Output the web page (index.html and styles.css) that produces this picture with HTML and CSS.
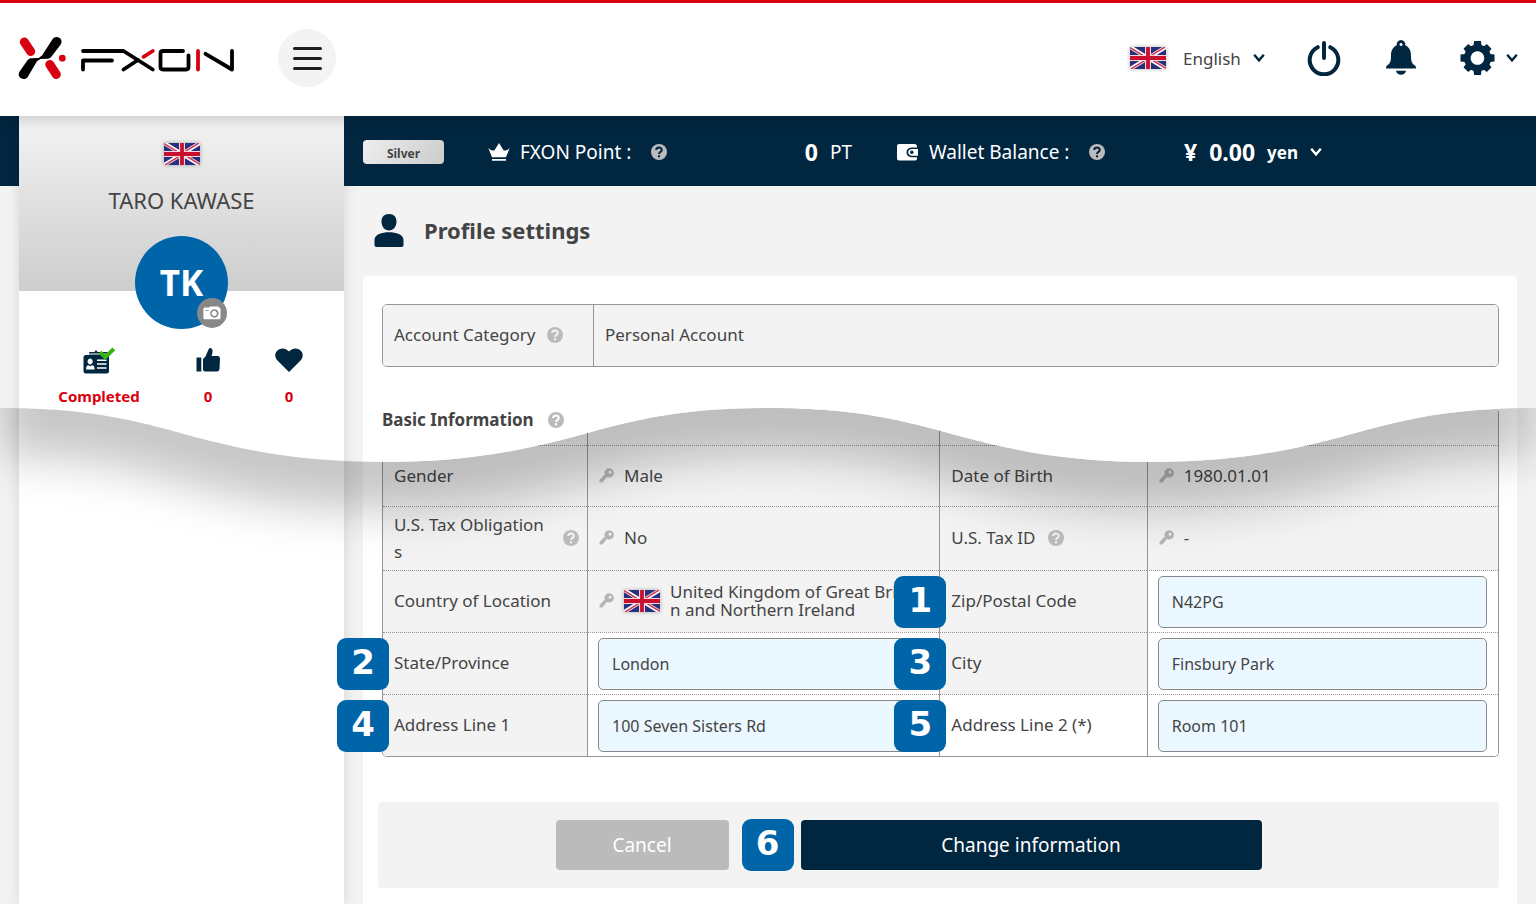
FILE: index.html
```html
<!DOCTYPE html>
<html lang="en">
<head>
<meta charset="utf-8">
<meta name="viewport" content="width=device-width, initial-scale=1">
<title>Profile settings | FXON</title>
<link rel="stylesheet" href="styles.css">
</head>
<body>
<svg class="defs" aria-hidden="true">
  <symbol id="flag" viewBox="0 0 36 22">
    <rect width="36" height="22" fill="#28307c"/>
    <path d="M0 0L36 22M36 0L0 22" stroke="#fff" stroke-width="4"/>
    <path d="M0 .6L17 11M36 21.4L19 11M35 0L18 10.4M1 22L18 11.6" stroke="#d0395a" stroke-width="1.6"/>
    <path d="M18 0V22M0 11H36" stroke="#f3d5dc" stroke-width="6"/>
    <path d="M18 0V22M0 11H36" stroke="#c8102e" stroke-width="3.8"/>
  </symbol>
  <symbol id="chevron" viewBox="0 0 12 10">
    <path d="M1.2 1.8L6 7.4L10.8 1.8" fill="none" stroke="currentColor" stroke-width="2.4"/>
  </symbol>
  <symbol id="help" viewBox="0 0 16 16">
    <circle cx="8" cy="8" r="8" fill="#bbb"/>
    <path d="M5.2 6.1C5.2 2.6 10.8 2.7 10.8 5.9C10.8 7.9 8 7.8 8 10" fill="none" stroke="var(--mark)" stroke-width="2"/>
    <rect x="7" y="11.2" width="2" height="2.1" fill="var(--mark)"/>
  </symbol>
  <symbol id="key" viewBox="0 0 15 15">
    <path fill="currentColor" fill-rule="evenodd" d="M10 .3a4.6 4.6 0 1 1-2 8.6L6.600 10.300 6.500 11.500 5 11.700 4.700 13.200 3.200 14.600H.5V12L5.800 6.500A4.600 4.600 0 0 1 10 .3ZM11 2.700a1.500 1.500 0 1 0 .1 0Z"/>
  </symbol>
</svg>

<div class="page">
  <header class="header">
    <a class="logo" href="#" aria-label="FXON">
      <svg width="218" height="44" viewBox="18 36 218 44" fill="none" stroke-linecap="round" aria-hidden="true">
        <path d="M24.300 42L30.700 51.500" stroke="#d9000f" stroke-width="9"/>
        <path d="M49.800 64.500L56.300 74.500" stroke="#d9000f" stroke-width="9"/>
        <path d="M52.500 39.300C54 36.800 57 36.400 59.300 37.800C61.800 39.300 62.300 42.200 60.600 44.800L51.500 56.500C50 58.400 48.800 58.800 46.500 58.800L40.500 59L37 61.200L28 76.500C26.300 79.200 23.500 79.700 21 78.300C18.600 76.700 18 73.700 19.800 71.200L27.300 60.500C28.600 58.700 30 58.200 32 58.200L38.500 58L42 55.500Z" fill="#000"/>
        <circle cx="62.300" cy="58.200" r="3.400" fill="#d9000f"/>
        <g stroke="#000" stroke-width="3.800" stroke-linejoin="round">
          <path d="M83 51H123.500L152.800 69.500"/>
          <path d="M83 69.500V60.500H112"/>
          <path d="M123.500 69.500L138 60"/>
          <path d="M183 51H163Q160.500 51 160.500 53.500V67Q160.500 69.500 163 69.500H186Q188.500 69.500 188.500 67V55.500"/>
          <path d="M205.500 53.800L232 69.500V51"/>
        </g>
        <path d="M143.500 56.800L152.800 51M198 51V69.500" stroke="#d9000f" stroke-width="3.800"/>
      </svg>
    </a>
    <button class="menu" type="button" aria-label="Menu"><span></span><span></span><span></span></button>
    <div class="tools">
      <div class="language">
        <svg class="flag" width="36" height="22" aria-hidden="true"><use href="#flag"/></svg>
        <span class="picker">
          <select aria-label="Language"><option>English</option></select>
          <svg class="chevron" width="12" height="10" aria-hidden="true"><use href="#chevron"/></svg>
        </span>
      </div>
      <button class="tool" type="button" aria-label="Log out">
        <svg width="34" height="36" viewBox="0 0 34 36" fill="none" stroke="currentColor" stroke-width="4" stroke-linecap="round"><path d="M10.700 7.200A14.300 14.300 0 1 0 23.300 7.200M17 3V18"/></svg>
      </button>
      <button class="tool" type="button" aria-label="Notifications">
        <svg width="30" height="36" viewBox="0 0 30 36" fill="currentColor"><path fill-rule="evenodd" d="M15 0a4.300 4.300 0 0 1 4.200 5.300C23.500 7.300 25 11 25 15.500C25 21.500 25.800 23.500 29 25.500Q30 26.300 30 28.400H0Q0 26.300 1 25.500C4.200 23.500 5 21.500 5 15.500C5 11 6.500 7.300 10.800 5.300A4.300 4.300 0 0 1 15 0ZM15 2.900a1.500 1.500 0 1 0 .1 0Z"/><path d="M10 30.800H20C19.300 36 10.700 36 10 30.800Z"/></svg>
      </button>
      <button class="tool tool-settings" type="button" aria-label="Settings">
        <svg width="35" height="36" viewBox="-18 -18 36 36" fill="currentColor"><path fill-rule="evenodd" d="M0-14a14 14 0 1 0 .1 0ZM0-7a7 7 0 1 1-.1 0Z"/><g id="teeth"><path d="M-4.200-12L-3.500-17.500H3.500L4.200-12ZM-4.200 12L-3.500 17.500H3.500L4.200 12ZM-12-4.200L-17.500-3.500V3.500L-12 4.200ZM12-4.200L17.500-3.500V3.500L12 4.200Z"/></g><use href="#teeth" transform="rotate(45) scale(.97)"/></svg>
        <svg class="chevron" width="12" height="10" aria-hidden="true"><use href="#chevron"/></svg>
      </button>
    </div>
  </header>

  <div class="shell">
    <aside class="sidebar">
      <div class="identity">
        <svg class="flag" width="36" height="22" aria-hidden="true"><use href="#flag"/></svg>
        <p class="name">TARO KAWASE</p>
        <div class="avatar">TK
          <button class="camera" type="button" aria-label="Change picture">
            <svg width="18" height="14" viewBox="0 0 18 14"><path fill="#fff" fill-rule="evenodd" d="M1.500 1.500H6L7.500 .5H15L16.300 1.500Q17.500 1.600 17.500 3V12Q17.500 13.300 16.300 13.300H1.500Q.4 13.300 .4 12V3Q.4 1.600 1.500 1.500ZM2.300 4.200V5H5.800V4.200ZM11.300 3.200a4.200 4.200 0 1 0 .1 0ZM11.300 4.800a2.600 2.600 0 1 1-.1 0Z"/></svg>
          </button>
        </div>
      </div>
      <ul class="stats">
        <li>
          <svg width="32" height="28" viewBox="0 0 32 28"><path fill="#002640" d="M2.500 8H6V6Q6 5 7 5H11.500Q13 1.500 14.500 5H24Q25.500 5.500 25.500 8Q26 9 26 10V24Q26 26.500 23.500 26.500H3Q.5 26.500 .5 24V10Q.5 8.300 2.500 8Z"/><path fill="#fff" d="M2 6.500H24V7.500H2ZM7.200 11.500a2.600 3 0 1 1-.1 0ZM3 22.500Q3 18.200 5.500 18.200L7.200 19.200L9 18.200Q11.600 18.200 11.600 22.500ZM14 12.500H23.500V14H14ZM14 16.300H23.500V17.800H14ZM14 20.300H23.500V21.800H14Z"/><path d="M17 5.300L22.300 10.300L30.800 1.800" fill="none" stroke="#34b50a" stroke-width="4"/></svg>
          <strong>Completed</strong>
        </li>
        <li>
          <svg width="24" height="28" viewBox="0 0 24 28" fill="#002640"><path d="M.5 10.500H5.300V24.500H.5ZM7 12L9.500 9.500L12.500 2.500Q14-.2 16 2Q17.300 4.500 15.500 9H22Q24 9 24 11.500L23.500 22Q23 24.500 21 24.500H9Q7 24.500 7 22.500Z"/></svg>
          <strong>0</strong>
        </li>
        <li>
          <svg width="28" height="28" viewBox="0 0 28 28" fill="#002640"><path d="M14 25L2 13C-4 5 7-3 14 4.500C21-3 32 5 26 13Z"/></svg>
          <strong>0</strong>
        </li>
      </ul>
    </aside>

    <main class="main">
      <div class="account-bar">
        <button class="rank" type="button">Silver</button>
        <div class="balance points">
          <svg width="22" height="18" viewBox="0 0 22 18" fill="#fff"><path d="M.3 5Q3.500 8.500 6.500 7.200L11 0L15.500 7.200Q18.500 8.500 21.700 5L18 14.200H4ZM4 16H18V17.800H4Z"/></svg>
          <span>FXON Point :</span>
          <svg class="help" width="16" height="16" role="img" aria-label="Help"><use href="#help"/></svg>
          <span class="value"><strong>0</strong><span>PT</span></span>
        </div>
        <div class="balance">
          <svg width="22" height="17" viewBox="0 0 22 17"><path fill="#fff" d="M2 0H17.500Q20 0 20 2.500V3.500H14.500Q9.500 4 9.500 8.300Q9.500 12.800 14.500 13.200H20V14.500Q20 16.500 18 16.500H2Q0 16.500 0 14.500V2Q0 0 2 0ZM14.500 5H21V11.700H14.500Q11.200 11.200 11.200 8.300Q11.200 5.500 14.500 5Z"/><circle cx="14.800" cy="8.300" r="1.700" fill="#002640"/></svg>
          <span>Wallet Balance :</span>
          <svg class="help" width="16" height="16" role="img" aria-label="Help"><use href="#help"/></svg>
        </div>
        <div class="money">
          <strong>¥</strong><strong>0.00</strong>
          <span class="picker">
            <select aria-label="Currency"><option>yen</option></select>
            <svg class="chevron" width="12" height="10" aria-hidden="true"><use href="#chevron"/></svg>
          </span>
        </div>
      </div>

      <h1 class="title">
        <svg width="30" height="34" viewBox="0 0 30 34" fill="#002640" aria-hidden="true"><path d="M15 0C20 0 22.500 3 22.500 7.500C22.500 12.500 19.500 16.500 15 16.500S7.500 12.500 7.500 7.500C7.500 3 10 0 15 0ZM15 18.300C22 18.300 29.500 20.500 29.500 26V31Q29.500 33 27.500 33H2.500Q.5 33 .5 31V26C.5 20.500 8 18.300 15 18.300Z"/></svg>
        <span>Profile settings</span>
      </h1>

      <form class="panel">
        <table class="category">
          <tr>
            <th scope="row"><span class="label">Account Category <svg class="help" width="16" height="16" role="img" aria-label="Help"><use href="#help"/></svg></span></th>
            <td>Personal Account</td>
          </tr>
        </table>

        <section class="basic">
          <h2 class="subtitle">Basic Information <svg class="help" width="16" height="16" role="img" aria-label="Help"><use href="#help"/></svg></h2>
          <table class="details">
            <colgroup><col class="col-first"><col class="col-value"><col class="col-label"><col class="col-last"></colgroup>
            <tr class="cut"><td></td><td></td><td></td><td></td></tr>
            <tr class="short">
              <th scope="row">Gender</th>
              <td><span class="locked"><svg class="key" width="15" height="15" aria-hidden="true"><use href="#key"/></svg>Male</span></td>
              <th scope="row">Date of Birth</th>
              <td><span class="locked"><svg class="key" width="15" height="15" aria-hidden="true"><use href="#key"/></svg>1980.01.01</span></td>
            </tr>
            <tr class="tall">
              <th scope="row"><span class="label spread"><span>U.S. Tax Obligations</span> <svg class="help" width="16" height="16" role="img" aria-label="Help"><use href="#help"/></svg></span></th>
              <td><span class="locked"><svg class="key" width="15" height="15" aria-hidden="true"><use href="#key"/></svg>No</span></td>
              <th scope="row"><span class="label">U.S. Tax ID <svg class="help" width="16" height="16" role="img" aria-label="Help"><use href="#help"/></svg></span></th>
              <td><span class="locked"><svg class="key" width="15" height="15" aria-hidden="true"><use href="#key"/></svg>-</span></td>
            </tr>
            <tr>
              <th scope="row">Country of Location</th>
              <td><span class="locked"><svg class="key" width="15" height="15" aria-hidden="true"><use href="#key"/></svg><svg class="flag" width="36" height="22" aria-hidden="true"><use href="#flag"/></svg><span class="country">United Kingdom of Great Britain and Northern Ireland</span></span></td>
              <th scope="row"><span class="step">1</span><label for="zip">Zip/Postal Code</label></th>
              <td class="edit"><input id="zip" type="text" value="N42PG"></td>
            </tr>
            <tr>
              <th scope="row"><span class="step">2</span><label for="state">State/Province</label></th>
              <td class="edit"><input id="state" type="text" value="London"></td>
              <th scope="row"><span class="step">3</span><label for="city">City</label></th>
              <td class="edit"><input id="city" type="text" value="Finsbury Park"></td>
            </tr>
            <tr>
              <th scope="row"><span class="step">4</span><label for="line1">Address Line 1</label></th>
              <td class="edit"><input id="line1" type="text" value="100 Seven Sisters Rd"></td>
              <th scope="row" class="optional"><span class="step">5</span><label for="line2">Address Line 2 (*)</label></th>
              <td class="edit"><input id="line2" type="text" value="Room 101"></td>
            </tr>
          </table>
        </section>

        <div class="actions">
          <button class="button cancel" type="button">Cancel</button>
          <div class="submit">
            <span class="step">6</span>
            <button class="button primary" type="button">Change information</button>
          </div>
        </div>
      </form>
    </main>
  </div>

  <svg class="wave" viewBox="0 0 1536 200" preserveAspectRatio="none" aria-hidden="true">
    <defs>
      <path id="curve" d="M0 0C95 0 140 14 195 29C255 45 310 54 384 54C458 54 513 45 573 29C628 14 673 0 768 0C863 0 908 14 963 29C1023 45 1078 54 1152 54C1226 54 1281 45 1341 29C1396 14 1441 0 1536 0V-200H0Z"/>
      <clipPath id="below"><path d="M0 0C95 0 140 14 195 29C255 45 310 54 384 54C458 54 513 45 573 29C628 14 673 0 768 0C863 0 908 14 963 29C1023 45 1078 54 1152 54C1226 54 1281 45 1341 29C1396 14 1441 0 1536 0V200H0Z"/></clipPath>
      <clipPath id="sheet"><rect x="381" y="0" width="1119" height="60"/></clipPath>
      <filter id="soft" x="-100" y="-300" width="1736" height="600" filterUnits="userSpaceOnUse"><feGaussianBlur stdDeviation="23"/></filter>
    </defs>
    <g clip-path="url(#below)"><g filter="url(#soft)"><use href="#curve" y="48" fill="#000" fill-opacity=".22"/></g></g>
    <g clip-path="url(#sheet)"><use href="#curve" fill="#fff"/></g>
  </svg>
</div>
</body>
</html>
```
FILE: styles.css
```css
:root {
  --navy: #002640;
  --red: #d9000f;
  --blue: #0064a9;
  --ground: #f3f3f3;
  --line: #969696;
  --mark: #f3f3f3;
}

* { box-sizing: border-box; }

body {
  margin: 0;
  background: var(--ground);
  color: #444;
  font: 17px/27px "Noto Sans", "Open Sans", sans-serif;
}

svg { display: block; flex: none; }
.defs { position: absolute; width: 0; height: 0; }

button, select, input { font: inherit; color: inherit; }
button { border: 0; padding: 0; cursor: pointer; }

.page {
  position: relative;
  display: flex;
  flex-direction: column;
  min-height: 100vh;
}

/* Header */
.header {
  position: relative;
  z-index: 2;
  display: flex;
  align-items: center;
  flex: none;
  height: 116px;
  padding: 0 18px 3px;
  border-top: 3px solid var(--red);
  background: #fff;
  box-shadow: 0 2px 14px rgba(0, 0, 0, .2);
}

.menu {
  display: flex;
  flex-direction: column;
  align-items: center;
  justify-content: center;
  gap: 7px;
  width: 58px;
  height: 58px;
  margin-left: 42px;
  border-radius: 50%;
  background: var(--ground);
}
.menu span { width: 29px; height: 3px; border-radius: 2px; background: #1e1e1e; }

.tools {
  display: flex;
  align-items: center;
  margin-left: auto;
  color: var(--navy);
}
.tool { margin-left: 45px; background: none; }
.language + .tool { margin-left: 42px; }
.tool-settings { display: flex; align-items: center; gap: 11px; margin-left: 44px; }

.language { display: flex; align-items: center; gap: 17px; }
.flag { box-shadow: 0 0 4px rgba(0, 0, 0, .3); }

.picker { position: relative; display: inline-flex; align-items: center; }
.picker select {
  appearance: none;
  padding: 0 24px 0 0;
  border: 0;
  background: none;
}
.picker .chevron { position: absolute; right: 0; pointer-events: none; }
.language select { color: #444; }

/* Layout */
.shell {
  display: flex;
  flex: 1;
  padding-left: 19px;
  background: linear-gradient(var(--navy) 70px, var(--ground) 70px);
}

.sidebar {
  flex: none;
  width: 325px;
  background: #fff;
  box-shadow: 0 0 14px rgba(0, 0, 0, .12);
}
.identity {
  display: flex;
  flex-direction: column;
  align-items: center;
  height: 175px;
  padding-top: 27px;
  background: linear-gradient(#f3f3f3, #cdcdcd);
}
.name { margin: 22px 0; font-size: 22px; }
.avatar {
  position: relative;
  flex: none;
  width: 93px;
  height: 93px;
  border-radius: 50%;
  background: var(--blue);
  color: #fff;
  font-size: 35px;
  font-weight: 700;
  line-height: 93px;
  text-align: center;
}
.camera {
  position: absolute;
  right: 1px;
  bottom: 1px;
  display: grid;
  place-items: center;
  width: 30px;
  height: 30px;
  border-radius: 50%;
  background: #888;
}
.stats {
  display: grid;
  grid-template-columns: 118fr 100fr 62fr;
  margin: 0;
  padding: 56px 24px 0 21px;
  list-style: none;
}
.stats li { display: flex; flex-direction: column; align-items: center; gap: 8px; }
.stats strong { color: var(--red); font-size: 15px; }

/* Account bar */
.main {
  display: flex;
  flex-direction: column;
  flex: 1;
  min-width: 0;
}
.account-bar {
  display: flex;
  align-items: center;
  flex: none;
  height: 70px;
  padding: 2px 19px 0;
  background: var(--navy);
  color: #fff;
  font-size: 19px;
  --mark: #002640;
}
.rank {
  width: 81px;
  height: 24px;
  margin-right: 44px;
  border-radius: 4px;
  background: linear-gradient(120deg, #eee, #ccc);
  color: #444;
  font-size: 12px;
  font-weight: 700;
}
.balance { display: flex; align-items: center; gap: 10px; width: 287px; }
.points { width: 409px; padding-right: 45px; }
.balance .help { margin-left: 10px; }
.value { display: flex; align-items: center; gap: 12px; margin-left: auto; }
.value strong, .money strong { font-size: 23px; }
.money { display: flex; align-items: center; gap: 12px; }
.money select { font-size: 17px; font-weight: 700; }
.money option { color: #444; }

/* Title */
.title {
  display: flex;
  align-items: center;
  gap: 20px;
  height: 90px;
  margin: 0;
  padding-left: 30px;
  font-size: 22px;
}
.title span { padding-bottom: 2px; }

/* Panel */
.panel {
  flex: 1;
  margin: 0 19px;
  padding: 28px 18px 16px 19px;
  border-radius: 4px 4px 0 0;
  background: #fff;
}
table {
  width: 100%;
  border: 1px solid var(--line);
  border-radius: 5px;
  border-spacing: 0;
  table-layout: fixed;
}
th, td {
  position: relative;
  padding: 0 11px 2px;
  background: var(--ground);
  font-weight: 400;
  text-align: left;
}
th + td, td + th, td + td { border-left: 1px solid var(--line); }

.category th { width: 210px; height: 61px; border-radius: 4px 0 0 4px; }
.category td { border-radius: 0 4px 4px 0; }

.label { display: flex; align-items: center; gap: 12px; }
.spread { justify-content: space-between; gap: 16px; margin-right: -3px; }
.spread span { word-break: break-all; }

.basic { position: relative; margin-top: 41px; }
.subtitle {
  position: absolute;
  top: -2px;
  left: 0;
  z-index: 3;
  display: flex;
  align-items: center;
  gap: 14px;
  margin: 0;
  font-size: 17px;
  --mark: #fff;
}

.details { border-top: 0; }
.col-first { width: 18.3%; }
.col-value { width: 31.6%; }
.col-label { width: 18.6%; }
.details th, .details td { height: 62px; border-top: 1px dotted var(--line); }
.details .cut td { height: 37px; border-top: 0; }
.details .short > * { height: 61px; }
.details .tall > * { height: 64px; }
.details .edit, .details .optional { background: #fff; }
.details .edit { padding: 0 11px 0 10px; }
.details tr:last-child th:first-child { border-bottom-left-radius: 4px; }
.details tr:last-child td:last-child { border-bottom-right-radius: 4px; }

.locked { display: flex; align-items: center; gap: 10px; }
.key { color: #b5b5b5; }
.country { padding-right: 8px; line-height: 18px; word-break: break-all; }

.edit input {
  display: block;
  width: 100%;
  height: 52px;
  padding: 0 13px;
  border: 1px solid #888;
  border-radius: 5px;
  background: #ecf8ff;
  font-size: 16px;
}

.step {
  z-index: 3;
  width: 52px;
  height: 52px;
  border-radius: 9px;
  background: var(--blue);
  color: #fff;
  font: 700 34px/48px "DejaVu Sans", sans-serif;
  text-align: center;
}
th .step { position: absolute; top: 5px; left: -46px; }

/* Actions */
.actions {
  display: flex;
  align-items: center;
  justify-content: center;
  gap: 13px;
  margin: 45px 0 0 -4px;
  padding: 17px 60px 17px 0;
  border-radius: 4px;
  background: var(--ground);
}
.submit { display: flex; align-items: center; gap: 7px; }
.button {
  height: 50px;
  border-radius: 4px;
  color: #fff;
  font-size: 19px;
}
.cancel { width: 173px; background: #bbb; }
.primary { width: 461px; background: var(--navy); }

/* Torn edge between the two halves of the sheet */
.wave {
  position: absolute;
  top: 408px;
  left: 0;
  z-index: 2;
  width: 100%;
  height: 200px;
  pointer-events: none;
}
```
